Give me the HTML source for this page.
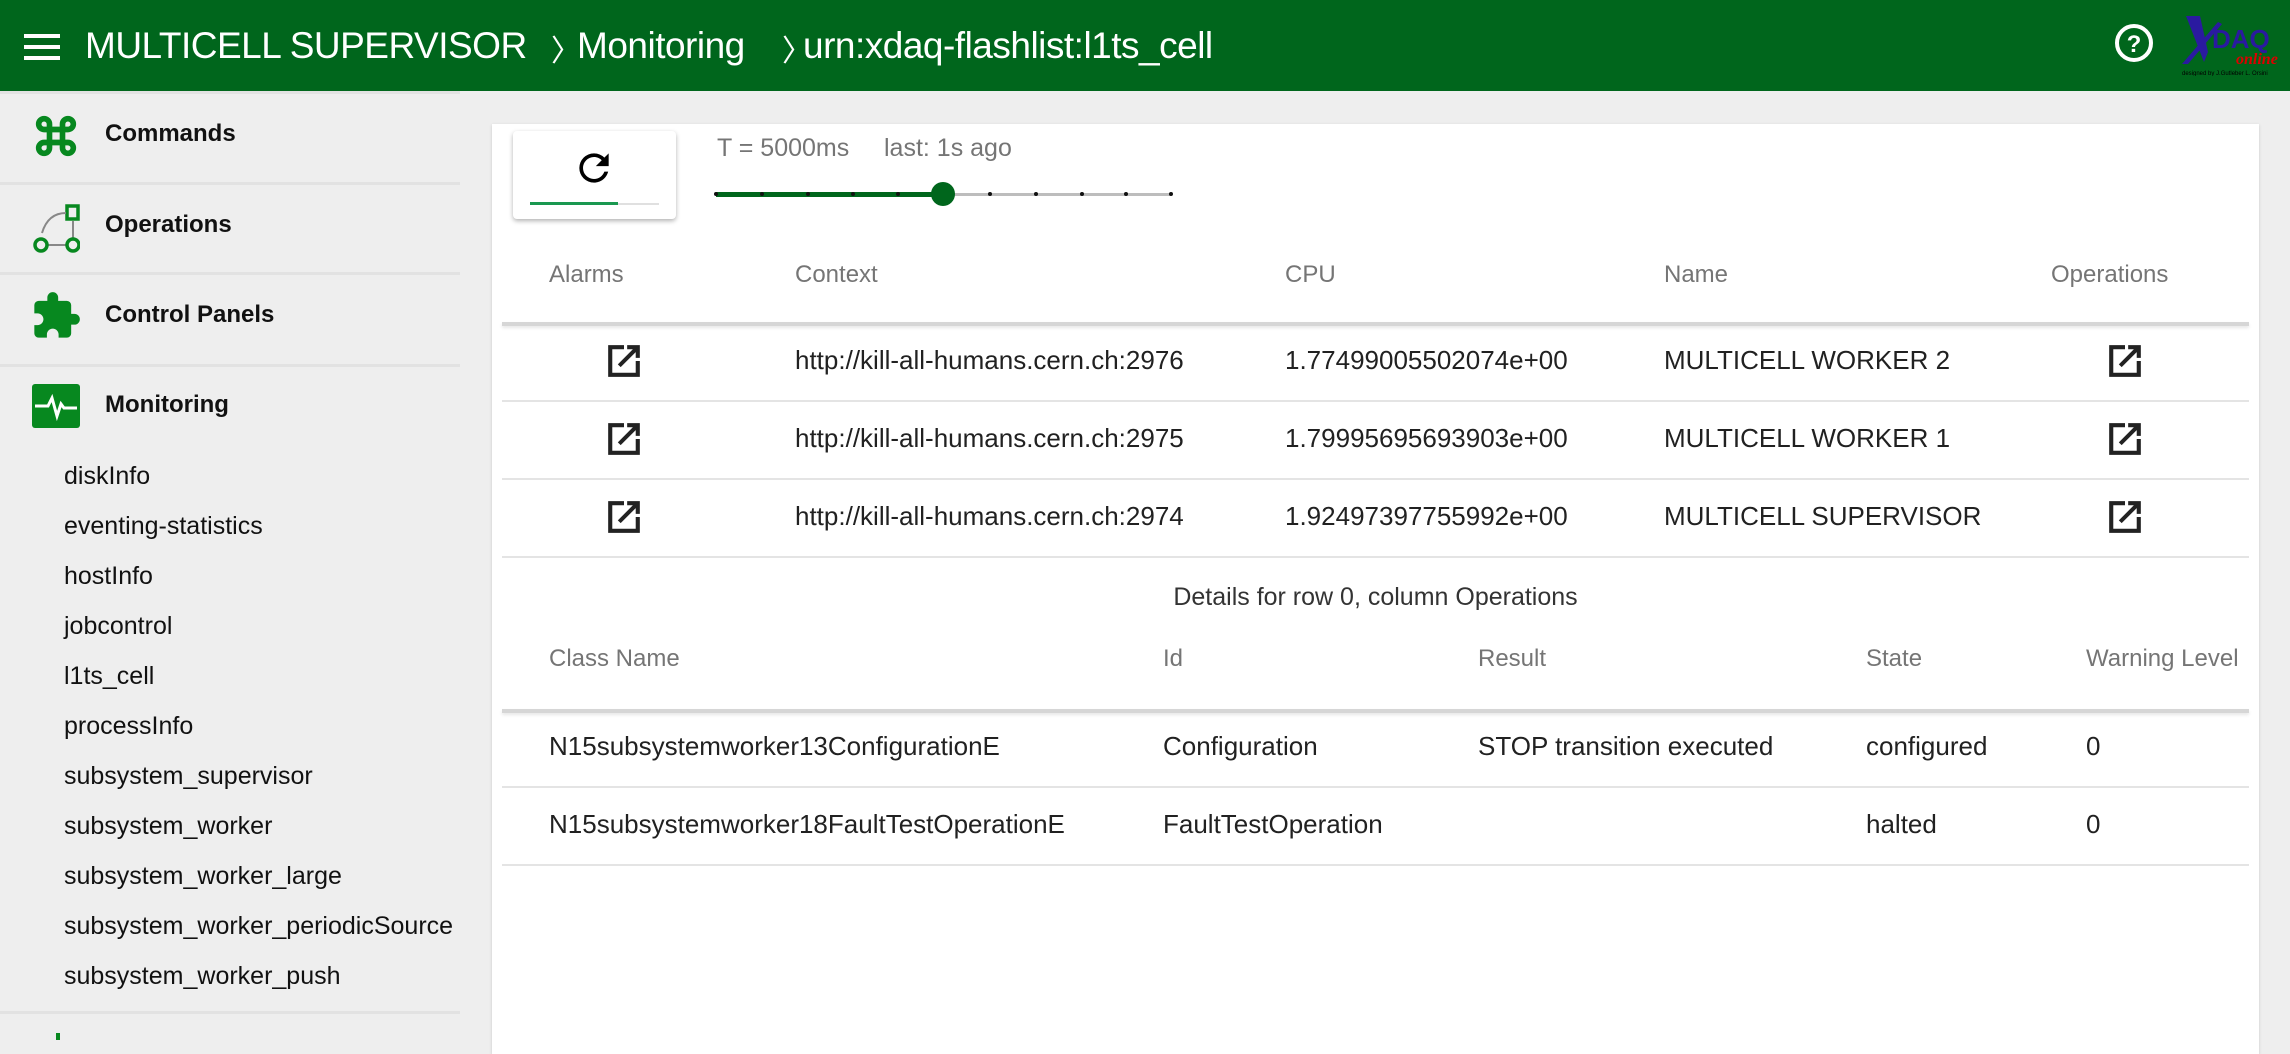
<!DOCTYPE html>
<html><head><meta charset="utf-8"><style>
*{margin:0;padding:0;box-sizing:border-box}
body{width:2290px;height:1040px;overflow:hidden;background:#eeeeee;font-family:"Liberation Sans",sans-serif;position:relative;color:#212121}
.a{position:absolute;white-space:nowrap}
#hdr{position:absolute;left:0;top:0;width:2290px;height:91px;background:#00661c}
.t{color:#fff;font-size:37px;top:25px;letter-spacing:-0.5px}
.nav{left:105px;font-size:24px;font-weight:bold;color:#111}
.div{position:absolute;left:0;width:460px;height:3px;background:#e2e2e2}
.sub{left:64px;font-size:25px;color:#111}
#card{position:absolute;left:492px;top:124px;width:1767px;height:930px;background:#fff;box-shadow:0 1px 3px rgba(0,0,0,.15)}
.th{font-size:24px;color:#757575}
.td{font-size:26px;color:#212121}
.hl{position:absolute;left:502px;width:1747px;height:4px;background:#d6d6d6;box-shadow:0 2px 3px rgba(0,0,0,.1)}
.rl{position:absolute;left:502px;width:1747px;height:2px;background:#e4e4e4}
.dot{position:absolute;top:192px;width:4px;height:4px;border-radius:2px;background:#111}
</style></head><body>
<div id="hdr"></div>
<div class="a" style="left:24px;top:34px;width:36px;height:4px;background:#fff"></div>
<div class="a" style="left:24px;top:45px;width:36px;height:4px;background:#fff"></div>
<div class="a" style="left:24px;top:56px;width:36px;height:4px;background:#fff"></div>
<div class="a t" style="left:85px">MULTICELL SUPERVISOR</div>
<div class="a t" style="left:551px;font-size:30px;top:26px">&#x232A;</div>
<div class="a t" style="left:577px">Monitoring</div>
<div class="a t" style="left:782px;font-size:30px;top:26px">&#x232A;</div>
<div class="a t" style="left:803px">urn:xdaq-flashlist:l1ts_cell</div>
<svg class="a" style="left:2113px;top:22px" width="42" height="42" viewBox="0 0 42 42"><circle cx="21" cy="21" r="17" fill="none" stroke="#fff" stroke-width="4"/><text x="21" y="30" text-anchor="middle" font-family="Liberation Sans" font-weight="bold" font-size="24" fill="#fff">?</text></svg>
<svg class="a" style="left:2178px;top:14px" width="108" height="62" viewBox="0 0 108 62"><path d="M8 2 L22 2 L30 38 L26 48 Z" fill="#2a1aa0"/><path d="M4 50 L40 8 L44 10 L10 50Z" fill="#2a1aa0"/><text x="34" y="34" font-family="Liberation Sans" font-weight="bold" font-size="26" fill="#2a1aa0">DAQ</text><text x="58" y="50" font-family="Liberation Serif" font-style="italic" font-weight="bold" font-size="16" fill="#d00">online</text><text x="4" y="61" font-family="Liberation Sans" font-size="6" fill="#000">designed by J.Gutleber L. Orsini</text></svg>

<div class="div" style="top:91px;height:3px"></div>
<svg class="a" style="left:30px;top:110px" width="52" height="52" viewBox="0 0 24 24"><path fill="#07881f" stroke="#07881f" stroke-width="0.6" d="M17.5 3A3.5 3.5 0 0 0 14 6.5V8h-4V6.5A3.5 3.5 0 0 0 6.5 3 3.5 3.5 0 0 0 3 6.5 3.5 3.5 0 0 0 6.5 10H8v4H6.5A3.5 3.5 0 0 0 3 17.5 3.5 3.5 0 0 0 6.5 21a3.5 3.5 0 0 0 3.5-3.5V16h4v1.5a3.5 3.5 0 0 0 3.5 3.5 3.5 3.5 0 0 0 3.5-3.5 3.5 3.5 0 0 0-3.5-3.5H16v-4h1.5A3.5 3.5 0 0 0 21 6.5 3.5 3.5 0 0 0 17.5 3m0 2A1.5 1.5 0 0 1 19 6.5 1.5 1.5 0 0 1 17.5 8H16V6.5A1.5 1.5 0 0 1 17.5 5m-11 0A1.5 1.5 0 0 1 8 6.5V8H6.5A1.5 1.5 0 0 1 5 6.5 1.5 1.5 0 0 1 6.5 5M10 10h4v4h-4v-4m-3.5 6H8v1.5A1.5 1.5 0 0 1 6.5 19 1.5 1.5 0 0 1 5 17.5 1.5 1.5 0 0 1 6.5 16m9.5 0h1.5a1.5 1.5 0 0 1 1.5 1.5 1.5 1.5 0 0 1-1.5 1.5 1.5 1.5 0 0 1-1.5-1.5V16z"/></svg>
<div class="a nav" style="top:120px">Commands</div>
<div class="div" style="top:182px"></div>
<svg class="a" style="left:32px;top:203px" width="48" height="50" viewBox="0 0 48 50"><rect x="35" y="3" width="11" height="13" fill="none" stroke="#07881f" stroke-width="3.5"/><path d="M34 10 Q16 10 10 30" fill="none" stroke="#888" stroke-width="2"/><path d="M41 18 V36" stroke="#888" stroke-width="2"/><path d="M14 42 H34" stroke="#888" stroke-width="2"/><circle cx="9" cy="42" r="6" fill="none" stroke="#07881f" stroke-width="3.5"/><circle cx="41" cy="42" r="6" fill="none" stroke="#07881f" stroke-width="3.5"/></svg>
<div class="a nav" style="top:211px">Operations</div>
<div class="div" style="top:364px"></div>
<div class="div" style="top:272px"></div>
<svg class="a" style="left:30px;top:290px" width="52" height="52" viewBox="0 0 24 24"><path fill="#07881f" d="M20.5 11H19V7a2 2 0 0 0-2-2h-4V3.5A2.5 2.5 0 0 0 10.5 1 2.5 2.5 0 0 0 8 3.5V5H4a2 2 0 0 0-2 2v3.8h1.5c1.5 0 2.7 1.2 2.7 2.7S5 16.2 3.5 16.2H2V20a2 2 0 0 0 2 2h3.8v-1.5c0-1.5 1.2-2.7 2.7-2.7s2.7 1.2 2.7 2.7V22H17a2 2 0 0 0 2-2v-4h1.5a2.5 2.5 0 0 0 2.5-2.5 2.5 2.5 0 0 0-2.5-2.5z"/></svg>
<div class="a nav" style="top:301px">Control Panels</div>
<svg class="a" style="left:32px;top:384px" width="48" height="44" viewBox="0 0 48 44"><rect x="0" y="0" width="48" height="44" rx="3" fill="#07881f"/><path d="M3 22 H16 L20 14 L25 32 L29 20 L32 24 H45" fill="none" stroke="#fff" stroke-width="3"/></svg>
<div class="a nav" style="top:391px">Monitoring</div>
<div class="a sub" style="top:462px">diskInfo</div>
<div class="a sub" style="top:512px">eventing-statistics</div>
<div class="a sub" style="top:562px">hostInfo</div>
<div class="a sub" style="top:612px">jobcontrol</div>
<div class="a sub" style="top:662px">l1ts_cell</div>
<div class="a sub" style="top:712px">processInfo</div>
<div class="a sub" style="top:762px">subsystem_supervisor</div>
<div class="a sub" style="top:812px">subsystem_worker</div>
<div class="a sub" style="top:862px">subsystem_worker_large</div>
<div class="a sub" style="top:912px">subsystem_worker_periodicSource</div>
<div class="a sub" style="top:962px">subsystem_worker_push</div>
<div class="div" style="top:1011px"></div>
<div class="a" style="left:56px;top:1033px;width:4px;height:7px;background:#07881f"></div>

<div id="card"></div>
<div class="a" style="left:513px;top:131px;width:163px;height:88px;background:#fff;border-radius:4px;box-shadow:0 2px 5px rgba(0,0,0,.3)"></div>
<svg class="a" style="left:572px;top:146px" width="44" height="44" viewBox="0 0 24 24"><path fill="#000" d="M17.65 6.35A7.958 7.958 0 0 0 12 4a8 8 0 0 0-8 8 8 8 0 0 0 8 8c3.730 0 6.84-2.55 7.73-6h-2.080A5.99 5.99 0 0 1 12 18a6 6 0 0 1-6-6 6 6 0 0 1 6-6c1.66 0 3.14.69 4.22 1.78L13 11h7V4l-2.35 2.35z"/></svg>
<div class="a" style="left:530px;top:203px;width:129px;height:2px;background:#e0e0e0"></div>
<div class="a" style="left:530px;top:202px;width:88px;height:3px;background:#1a9850"></div>
<div class="a th" style="left:717px;top:134px;font-size:25px">T = 5000ms</div>
<div class="a th" style="left:884px;top:134px;font-size:25px">last: 1s ago</div>
<div class="a" style="left:716px;top:192px;width:227px;height:5px;background:#00661c"></div>
<div class="a" style="left:943px;top:193px;width:228px;height:3px;background:#bdbdbd"></div>
<div class="dot" style="left:714px"></div><div class="dot" style="left:760px"></div><div class="dot" style="left:806px"></div><div class="dot" style="left:851px"></div><div class="dot" style="left:896px"></div><div class="dot" style="left:988px"></div><div class="dot" style="left:1034px"></div><div class="dot" style="left:1080px"></div><div class="dot" style="left:1124px"></div><div class="dot" style="left:1169px"></div>
<div class="a" style="left:931px;top:182px;width:24px;height:24px;border-radius:12px;background:#00661c"></div>

<div class="a th" style="left:549px;top:261px">Alarms</div>
<div class="a th" style="left:795px;top:261px">Context</div>
<div class="a th" style="left:1285px;top:261px">CPU</div>
<div class="a th" style="left:1664px;top:261px">Name</div>
<div class="a th" style="left:2051px;top:261px">Operations</div>
<div class="hl" style="top:322px"></div>

<svg width="0" height="0" style="position:absolute"><defs><symbol id="ext" viewBox="0 0 24 24"><path fill="#222" d="M2 2h10v2.6H4.6v14.8h14.8V12H22v10H2V2zm12 0h8v8h-2.6V6.4l-9.5 9.5-1.8-1.8 9.5-9.5H14V2z"/></symbol></defs></svg>
<svg class="a" style="left:605px;top:342px" width="38" height="38"><use href="#ext"/></svg>
<svg class="a" style="left:2106px;top:342px" width="38" height="38"><use href="#ext"/></svg>
<div class="a td" style="left:795px;top:345px">http://kill-all-humans.cern.ch:2976</div>
<div class="a td" style="left:1285px;top:345px">1.77499005502074e+00</div>
<div class="a td" style="left:1664px;top:345px">MULTICELL WORKER 2</div>
<div class="rl" style="top:400px"></div>
<svg class="a" style="left:605px;top:420px" width="38" height="38"><use href="#ext"/></svg>
<svg class="a" style="left:2106px;top:420px" width="38" height="38"><use href="#ext"/></svg>
<div class="a td" style="left:795px;top:423px">http://kill-all-humans.cern.ch:2975</div>
<div class="a td" style="left:1285px;top:423px">1.79995695693903e+00</div>
<div class="a td" style="left:1664px;top:423px">MULTICELL WORKER 1</div>
<div class="rl" style="top:478px"></div>
<svg class="a" style="left:605px;top:498px" width="38" height="38"><use href="#ext"/></svg>
<svg class="a" style="left:2106px;top:498px" width="38" height="38"><use href="#ext"/></svg>
<div class="a td" style="left:795px;top:501px">http://kill-all-humans.cern.ch:2974</div>
<div class="a td" style="left:1285px;top:501px">1.92497397755992e+00</div>
<div class="a td" style="left:1664px;top:501px">MULTICELL SUPERVISOR</div>
<div class="rl" style="top:556px"></div>

<div class="a" style="left:502px;width:1747px;top:583px;text-align:center;font-size:25px;color:#333">Details for row 0, column Operations</div>
<div class="a th" style="left:549px;top:645px">Class Name</div>
<div class="a th" style="left:1163px;top:645px">Id</div>
<div class="a th" style="left:1478px;top:645px">Result</div>
<div class="a th" style="left:1866px;top:645px">State</div>
<div class="a th" style="left:2086px;top:645px">Warning Level</div>
<div class="hl" style="top:709px"></div>
<div class="a td" style="left:549px;top:731px">N15subsystemworker13ConfigurationE</div>
<div class="a td" style="left:1163px;top:731px">Configuration</div>
<div class="a td" style="left:1478px;top:731px">STOP transition executed</div>
<div class="a td" style="left:1866px;top:731px">configured</div>
<div class="a td" style="left:2086px;top:731px">0</div>
<div class="rl" style="top:786px"></div>
<div class="a td" style="left:549px;top:809px">N15subsystemworker18FaultTestOperationE</div>
<div class="a td" style="left:1163px;top:809px">FaultTestOperation</div>
<div class="a td" style="left:1866px;top:809px">halted</div>
<div class="a td" style="left:2086px;top:809px">0</div>
<div class="rl" style="top:864px"></div>
</body></html>
